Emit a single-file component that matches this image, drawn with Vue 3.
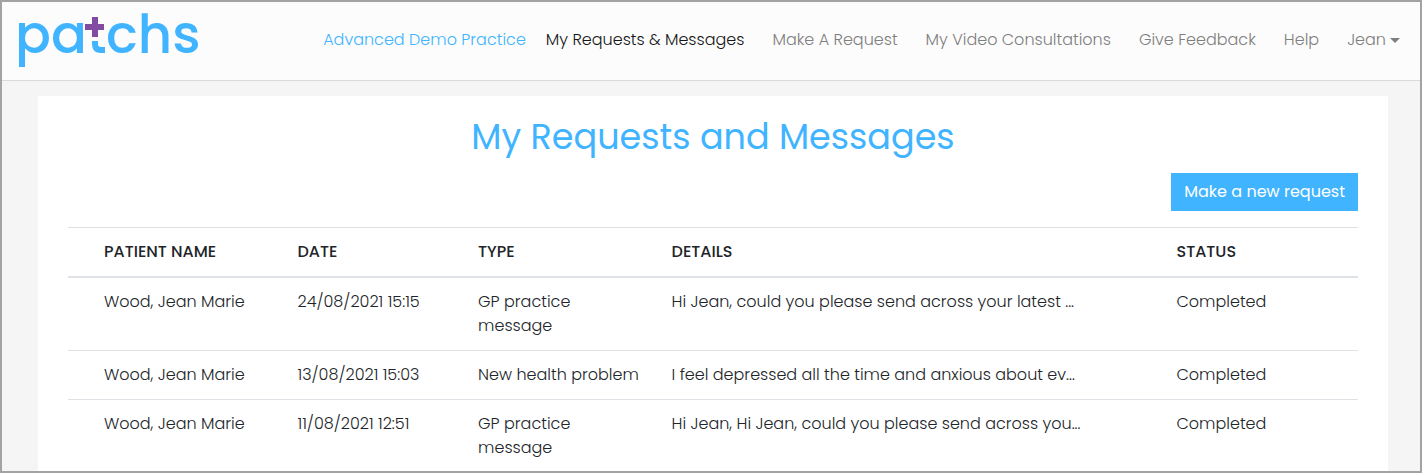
<script setup>
const links = [
  { label: 'Advanced Demo Practice', kind: 'practice' },
  { label: 'My Requests & Messages', kind: 'active' },
  { label: 'Make A Request', kind: '' },
  { label: 'My Video Consultations', kind: '' },
  { label: 'Give Feedback', kind: '' },
  { label: 'Help', kind: '' },
]

const requests = [
  { name: 'Wood, Jean Marie', date: '24/08/2021 15:15', type: 'GP practice message', details: 'Hi Jean, could you please send across your latest ...', status: 'Completed' },
  { name: 'Wood, Jean Marie', date: '13/08/2021 15:03', type: 'New health problem', details: 'I feel depressed all the time and anxious about ev...', status: 'Completed' },
  { name: 'Wood, Jean Marie', date: '11/08/2021 12:51', type: 'GP practice message', details: 'Hi Jean, Hi Jean, could you please send across you...', status: 'Completed' },
]
</script>

<template>
  <div class="page">
    <header class="topbar">
      <a class="brand" href="#" aria-label="patchs">
        <svg width="184" height="56" viewBox="0 0 184 56" aria-hidden="true">
          <text class="word" x="-3" y="40">pa</text>
          <path class="stem" d="M77 28 V31 Q77 37 83 37 H87" />
          <path class="plus" d="M67 14 H86 M77 4 V24" />
          <text class="word" x="88" y="40">chs</text>
        </svg>
      </a>
      <nav class="nav">
        <a v-for="link in links" :key="link.label" href="#" class="link" :class="link.kind">{{ link.label }}</a>
        <button type="button" class="link user">Jean<span class="caret"></span></button>
      </nav>
    </header>

    <main class="card">
      <h1>My Requests and Messages</h1>
      <div class="actions">
        <button type="button" class="new">Make a new request</button>
      </div>
      <table>
        <colgroup>
          <col class="c-mark" />
          <col class="c-name" />
          <col class="c-date" />
          <col class="c-type" />
          <col />
          <col class="c-status" />
        </colgroup>
        <thead>
          <tr>
            <th></th>
            <th scope="col">PATIENT NAME</th>
            <th scope="col">DATE</th>
            <th scope="col">TYPE</th>
            <th scope="col">DETAILS</th>
            <th scope="col">STATUS</th>
          </tr>
        </thead>
        <tbody>
          <tr v-for="r in requests" :key="r.date">
            <td></td>
            <td>{{ r.name }}</td>
            <td>{{ r.date }}</td>
            <td>{{ r.type }}</td>
            <td>{{ r.details }}</td>
            <td>{{ r.status }}</td>
          </tr>
        </tbody>
      </table>
    </main>
  </div>
</template>

<style>
body {
  margin: 0;
}
</style>

<style scoped>
.page {
  box-sizing: border-box;
  height: 100vh;
  overflow: hidden;
  border: 2px solid #a3a3a3;
  background: #f5f5f5;
  color: #212529;
  font-family: Poppins, Inter, "Open Sans", sans-serif;
  font-size: 16px;
  font-weight: 300;
  line-height: 24px;
}

.topbar {
  display: flex;
  align-items: center;
  justify-content: space-between;
  padding: 11px 20px 11px 16px;
  border-bottom: 1px solid #dadada;
  background: #fcfcfc;
}

.brand,
.brand svg {
  display: block;
  overflow: visible;
}

.word {
  fill: #40b4ff;
  font-size: 53px;
  font-weight: 500;
}

.stem {
  fill: none;
  stroke: #40b4ff;
  stroke-width: 6;
}

.plus {
  fill: none;
  stroke: #804ba0;
  stroke-width: 6;
}

.nav {
  display: flex;
  align-items: center;
  gap: 28px;
  padding-bottom: 2px;
}

.link {
  padding: 0;
  border: 0;
  background: none;
  color: #7f7f7f;
  font: inherit;
  text-decoration: none;
  white-space: nowrap;
}

.practice {
  margin-right: -8px;
  color: #40b4ff;
}

.active {
  color: #161616;
}

.user {
  display: flex;
  align-items: center;
  gap: 4px;
}

.caret {
  border: 5px solid transparent;
  border-top-color: currentColor;
  border-bottom: 0;
}

.card {
  margin: 15px 32px 0 36px;
  padding: 20px 30px 0;
  background: #fff;
}

h1 {
  margin: 0;
  color: #40b4ff;
  font-size: 35px;
  font-weight: 400;
  line-height: 42px;
  text-align: center;
}

.actions {
  display: flex;
  justify-content: flex-end;
  padding: 15px 0 16px;
}

.new {
  padding: 7px 13px;
  border: 0;
  background: #40b4ff;
  color: #fff;
  font: inherit;
  font-weight: 400;
}

table {
  width: 100%;
  table-layout: fixed;
  border-collapse: collapse;
}

.c-mark {
  width: 24px;
}

.c-name,
.c-type,
.c-status {
  width: 15%;
}

.c-date {
  width: 14%;
}

th,
td {
  padding: 12px;
  border-top: 1px solid #dee2e6;
  text-align: left;
  vertical-align: top;
}

th {
  border-bottom: 2px solid #dee2e6;
  font-weight: 500;
}
</style>
